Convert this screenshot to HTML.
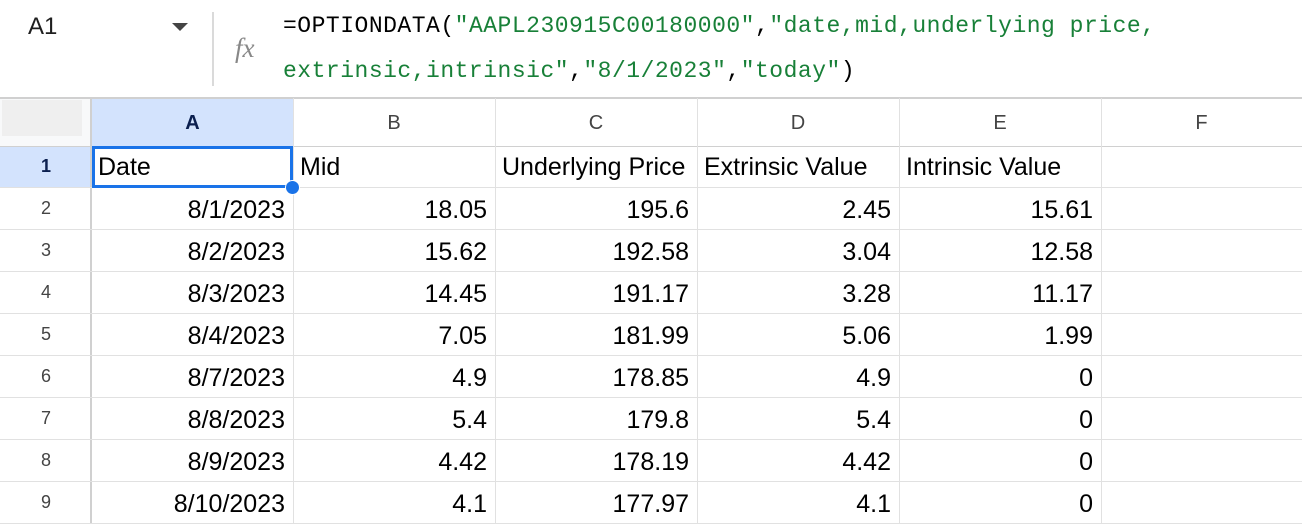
<!DOCTYPE html>
<html><head><meta charset="utf-8"><style>
*{margin:0;padding:0;box-sizing:border-box}
body{width:1302px;height:524px;background:#fff;position:relative;overflow:hidden;font-family:"Liberation Sans",Arial,sans-serif}
.a{position:absolute}
.mono{font-family:"Liberation Mono",monospace;font-size:23px;letter-spacing:0.5px;white-space:pre;color:#000}
.g{color:#188038}
.hl{position:absolute;height:1px;background:#e1e1e1;left:0;width:1302px}
.vl{position:absolute;width:1px;background:#e1e1e1;top:98px;height:426px}
.cell{position:absolute;font-size:25px;color:#000;height:42px;line-height:44px;white-space:nowrap;overflow:hidden}
.r{text-align:right}
.rh{position:absolute;left:0;width:92px;text-align:center;font-size:18px;color:#444;height:42px;line-height:42px}
.ch{position:absolute;top:98px;height:48px;line-height:50px;text-align:center;font-size:20px;color:#444}
</style></head><body>
<div class="a" style="left:28px;top:13px;font-size:24px;color:#1f1f1f">A1</div>
<div class="a" style="left:172px;top:23px;width:0;height:0;border-left:8px solid transparent;border-right:8px solid transparent;border-top:8px solid #444"></div>
<div class="a" style="left:212px;top:12px;width:2px;height:74px;background:#dadada"></div>
<div class="a" style="left:235px;top:33px;font-family:'Liberation Serif',serif;font-style:italic;font-size:27px;color:#888">fx</div>
<div class="a mono" style="left:283px;top:13px">=OPTIONDATA(<span class="g">"AAPL230915C00180000"</span>,<span class="g">"date,mid,underlying price,</span></div>
<div class="a mono" style="left:283px;top:58px"><span class="g">extrinsic,intrinsic"</span>,<span class="g">"8/1/2023"</span>,<span class="g">"today"</span>)</div>
<div class="a" style="left:0;top:98px;width:92px;height:48px;background:#f8f9fa"></div>
<div class="a" style="left:2px;top:100px;width:80px;height:36px;background:#efefef"></div>
<div class="a" style="left:92px;top:98px;width:201px;height:48px;background:#d3e3fd"></div>
<div class="a" style="left:0;top:146px;width:92px;height:41px;background:#d3e3fd"></div>
<div class="a" style="left:0;top:97px;width:1302px;height:2px;background:#d0d0d0"></div>
<div class="a" style="left:90px;top:98px;width:2px;height:426px;background:#d0d0d0"></div>
<div class="hl" style="top:146px;background:#d0d0d0"></div>
<div class="hl" style="top:187px"></div><div class="hl" style="top:229px"></div><div class="hl" style="top:271px"></div><div class="hl" style="top:313px"></div><div class="hl" style="top:355px"></div><div class="hl" style="top:397px"></div><div class="hl" style="top:439px"></div><div class="hl" style="top:481px"></div><div class="hl" style="top:523px"></div>
<div class="vl" style="left:293px"></div><div class="vl" style="left:495px"></div><div class="vl" style="left:697px"></div><div class="vl" style="left:899px"></div><div class="vl" style="left:1101px"></div>
<div class="ch" style="left:92px;width:201px;color:#0b1f4f;font-weight:bold">A</div>
<div class="ch" style="left:293px;width:202px">B</div>
<div class="ch" style="left:495px;width:202px">C</div>
<div class="ch" style="left:697px;width:202px">D</div>
<div class="ch" style="left:899px;width:202px">E</div>
<div class="ch" style="left:1101px;width:201px">F</div>
<div class="rh" style="top:146px;height:41px;line-height:41px;color:#0b1f4f;font-weight:bold">1</div>
<div class="rh" style="top:187px">2</div><div class="rh" style="top:229px">3</div><div class="rh" style="top:271px">4</div><div class="rh" style="top:313px">5</div><div class="rh" style="top:355px">6</div><div class="rh" style="top:397px">7</div><div class="rh" style="top:439px">8</div><div class="rh" style="top:481px">9</div>
<div class="cell" style="left:98px;top:146px;height:41px;line-height:43px">Date</div>
<div class="cell" style="left:300px;top:146px;height:41px;line-height:43px">Mid</div>
<div class="cell" style="left:502px;top:146px;height:41px;line-height:43px;width:196px">Underlying Price</div>
<div class="cell" style="left:704px;top:146px;height:41px;line-height:43px">Extrinsic Value</div>
<div class="cell" style="left:906px;top:146px;height:41px;line-height:43px">Intrinsic Value</div>
<div class="a" style="left:92px;top:146px;width:201px;height:42px;border:3px solid #1a73e8"></div>
<div class="a" style="left:285px;top:180px;width:15px;height:15px;border-radius:50%;background:#1a73e8;border:1px solid #fff"></div>
<div id="rows"></div>
<script>
var d=[["8/1/2023","18.05","195.6","2.45","15.61"],["8/2/2023","15.62","192.58","3.04","12.58"],["8/3/2023","14.45","191.17","3.28","11.17"],["8/4/2023","7.05","181.99","5.06","1.99"],["8/7/2023","4.9","178.85","4.9","0"],["8/8/2023","5.4","179.8","5.4","0"],["8/9/2023","4.42","178.19","4.42","0"],["8/10/2023","4.1","177.97","4.1","0"]];
var L=[92,293,495,697,899],W=[201,202,202,202,202],h="";
d.forEach(function(r,i){r.forEach(function(v,j){h+='<div class="cell r" style="left:'+L[j]+'px;width:'+(W[j]-8)+'px;top:'+(188+42*i)+'px">'+v+'</div>';});});
document.getElementById("rows").outerHTML=h;
</script>
</body></html>
